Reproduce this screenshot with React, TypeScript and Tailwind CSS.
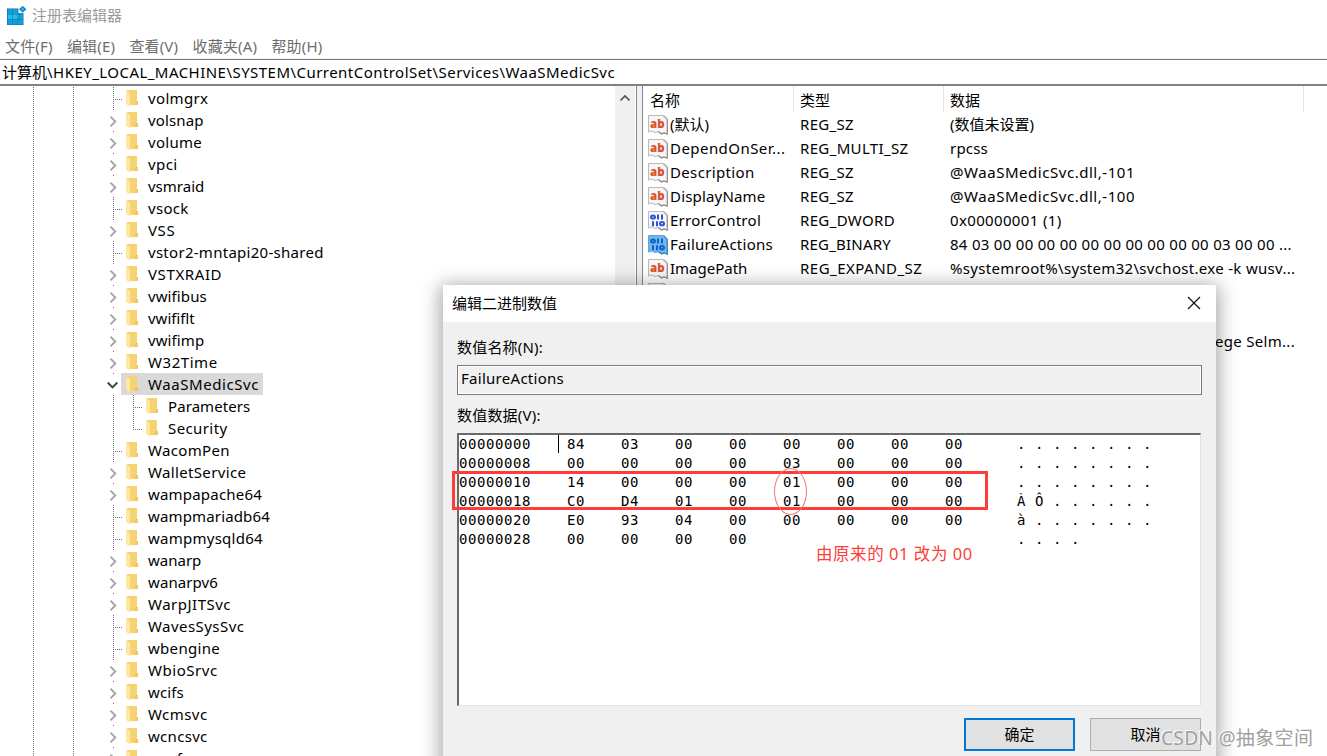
import React from "react";

type Node = { name: string; kind: "leaf" | "closed" | "open" | "child" | "last"; tracking?: string };

const tree: Node[] = [
  { name: "volmgrx", kind: "leaf", tracking: "tracking-[0.35px]" },
  { name: "volsnap", kind: "closed", tracking: "tracking-[0.15px]" },
  { name: "volume", kind: "closed", tracking: "tracking-[0.3px]" },
  { name: "vpci", kind: "closed", tracking: "tracking-[0.4px]" },
  { name: "vsmraid", kind: "closed" },
  { name: "vsock", kind: "leaf", tracking: "tracking-[0.3px]" },
  { name: "VSS", kind: "closed", tracking: "tracking-[0.6px]" },
  { name: "vstor2-mntapi20-shared", kind: "leaf", tracking: "tracking-[0.28px]" },
  { name: "VSTXRAID", kind: "closed", tracking: "tracking-[0.6px]" },
  { name: "vwifibus", kind: "closed", tracking: "tracking-[0.1px]" },
  { name: "vwififlt", kind: "closed" },
  { name: "vwifimp", kind: "closed", tracking: "tracking-[0.1px]" },
  { name: "W32Time", kind: "closed", tracking: "tracking-[0.55px]" },
  { name: "WaaSMedicSvc", kind: "open", tracking: "tracking-[0.58px]" },
  { name: "Parameters", kind: "child", tracking: "tracking-[0.08px]" },
  { name: "Security", kind: "last", tracking: "tracking-[0.4px]" },
  { name: "WacomPen", kind: "leaf", tracking: "tracking-[0.35px]" },
  { name: "WalletService", kind: "closed", tracking: "tracking-[0.35px]" },
  { name: "wampapache64", kind: "closed", tracking: "tracking-[0.2px]" },
  { name: "wampmariadb64", kind: "leaf", tracking: "tracking-[0.15px]" },
  { name: "wampmysqld64", kind: "leaf", tracking: "tracking-[0.25px]" },
  { name: "wanarp", kind: "closed" },
  { name: "wanarpv6", kind: "closed", tracking: "tracking-[0.1px]" },
  { name: "WarpJITSvc", kind: "closed", tracking: "tracking-[0.5px]" },
  { name: "WavesSysSvc", kind: "leaf", tracking: "tracking-[0.45px]" },
  { name: "wbengine", kind: "leaf", tracking: "tracking-[0.3px]" },
  { name: "WbioSrvc", kind: "closed", tracking: "tracking-[0.55px]" },
  { name: "wcifs", kind: "closed", tracking: "tracking-[0.15px]" },
  { name: "Wcmsvc", kind: "closed", tracking: "tracking-[0.45px]" },
  { name: "wcncsvc", kind: "closed", tracking: "tracking-[0.3px]" },
  { name: "wcnfs", kind: "closed", tracking: "tracking-[0.15px]" },
];

const values = [
  { icon: "ab", name: "(默认)", nt: "", type: "REG_SZ", tt: "tracking-[0.3px]", data: "(数值未设置)", dt: "" },
  { icon: "ab", name: "DependOnSer...", nt: "tracking-[0.45px]", type: "REG_MULTI_SZ", tt: "tracking-[0.35px]", data: "rpcss", dt: "tracking-[0.2px]" },
  { icon: "ab", name: "Description", nt: "tracking-[0.35px]", type: "REG_SZ", tt: "tracking-[0.3px]", data: "@WaaSMedicSvc.dll,-101", dt: "tracking-[0.54px]" },
  { icon: "ab", name: "DisplayName", nt: "tracking-[0.18px]", type: "REG_SZ", tt: "tracking-[0.3px]", data: "@WaaSMedicSvc.dll,-100", dt: "tracking-[0.54px]" },
  { icon: "bin", name: "ErrorControl", nt: "tracking-[0.27px]", type: "REG_DWORD", tt: "tracking-[0.35px]", data: "0x00000001 (1)", dt: "tracking-[0.35px]" },
  { icon: "sel", name: "FailureActions", nt: "tracking-[0.28px]", type: "REG_BINARY", tt: "tracking-[0.2px]", data: "84 03 00 00 00 00 00 00 00 00 00 00 03 00 00 ...", dt: "tracking-[0.29px]" },
  { icon: "ab", name: "ImagePath", nt: "", type: "REG_EXPAND_SZ", tt: "tracking-[0.48px]", data: "%systemroot%\\system32\\svchost.exe -k wusv...", dt: "tracking-[0.31px]" },
  { icon: "ab", name: "", nt: "", type: "", tt: "", data: "", dt: "" },
];

const hex = [
  { off: "00000000", bytes: ["84", "03", "00", "00", "00", "00", "00", "00"], text: "........" },
  { off: "00000008", bytes: ["00", "00", "00", "00", "03", "00", "00", "00"], text: "........" },
  { off: "00000010", bytes: ["14", "00", "00", "00", "01", "00", "00", "00"], text: "........" },
  { off: "00000018", bytes: ["C0", "D4", "01", "00", "01", "00", "00", "00"], text: "ÀÔ......" },
  { off: "00000020", bytes: ["E0", "93", "04", "00", "00", "00", "00", "00"], text: "à......." },
  { off: "00000028", bytes: ["00", "00", "00", "00"], text: "...." },
];

function AppIcon() {
  const cells = [0, 1, 2].flatMap((r) => [0, 1, 2].map((c) => [c, r]));
  return (
    <svg className="h-5 w-5 shrink-0" viewBox="0 0 20 20">
      <rect x="0" y="2.500" width="16.500" height="16.500" fill="#0a77b2" />
      {cells.map(([c, r]) => (
        <rect key={`${c}${r}`} x={0.7 + c * 5.3} y={3.2 + r * 5.3} width="4.700" height="4.700" fill={r === 1 && c < 2 ? "#28bdf0" : "#12a0da"} />
      ))}
      <path d="M11.500 0H20v8h-3.300v-1h-5.200z" fill="#fff" />
      <path d="M15.700-.200l3.700 3.500-3.700 3.500L12 3.300z" fill="#1583bd" />
      <path d="M15.700 1.800l1.600 1.500-1.600 1.500-1.600-1.500z" fill="#4cb8e6" />
    </svg>
  );
}

function Folder() {
  return (
    <svg className="h-[17px] w-[13px] shrink-0" viewBox="0 0 13 17">
      <path d="M1 0h10v11h1v4H1z" fill="#f6d270" />
      <path d="M10 11h2v4H8z" fill="#f0c75c" />
      <path d="M0 0.500l4 2.500v13.500L0 14z" fill="#ffe79f" />
    </svg>
  );
}

function ValueIcon({ kind }: { kind: string }) {
  const sel = kind === "sel";
  return (
    <svg className="h-5 w-5 shrink-0" viewBox="0 0 20 20">
      <path
        d="M.5.500h15l4 4v14.800l-3-1-3 .7-3-2.300-3.500.8-3-1.500-3.500 1z"
        fill={sel ? "#74b7ea" : "#f6f6f6"}
        stroke={sel ? "#5ba3dc" : "#b9b9b9"}
      />
      <path d="M15.500.500l4 4" fill="none" stroke={sel ? "#4389c4" : "#a5a5a5"} strokeWidth="1.300" />
      <path d="M19.300 4.500v14.500l-3-1-3 .7-3-2.300" fill="none" stroke={sel ? "#3f86c0" : "#929292"} strokeWidth="1.300" />
      {kind === "ab" ? (
        <text x="2" y="13.300" fontSize="12.800" fontWeight="800" fill="#dc5230" fontFamily="Open Sans, sans-serif" textLength="14.500" lengthAdjust="spacingAndGlyphs">
          ab
        </text>
      ) : (
        <g fill="none" stroke={sel ? "#0d62cf" : "#3050dc"} strokeWidth="2">
          <ellipse cx="5" cy="6" rx="2" ry="1.600" />
          <path d="M10 3.500v5M14 3.500v5M5 10.200v5M9 10.200v5" />
          <ellipse cx="14" cy="12.700" rx="2" ry="1.600" />
        </g>
      )}
    </svg>
  );
}

function TreeRow({ node }: { node: Node }) {
  const { kind } = node;
  const nested = kind === "child" || kind === "last";
  const label = <span className={`ml-[9px] whitespace-nowrap pb-px ${node.tracking ?? ""}`}>{node.name}</span>;
  return (
    <div className="flex h-[22px] shrink-0 items-center">
      <svg className={nested ? "h-[22px] w-[146px] shrink-0" : "h-[22px] w-[126px] shrink-0"} viewBox={nested ? "0 0 146 22" : "0 0 126 22"} fill="none">
        <g stroke="#6f6f6f" strokeDasharray="1 1">
          <path d="M33.500 0v22M73.500 0v22" />
          {(kind === "leaf" || nested) && <path d="M113.500 0v22" />}
          {kind === "leaf" && <path d="M115 12.500h8" />}
          {kind === "child" && <path d="M133.500 0v22M135 12.500h7" />}
          {kind === "last" && <path d="M133.500 0v13M135 12.500h7" />}
          {(kind === "closed" || kind === "open") && <path d="M113.500 0v1" />}
        </g>
        {kind === "closed" && <path d="M110.500 7.700l4.800 4.800-4.800 4.800" stroke="#a6a6a6" strokeWidth="1.900" />}
        {kind === "open" && <path d="M107.700 9.500l4.800 4.800 4.800-4.800" stroke="#404040" strokeWidth="1.900" />}
      </svg>
      {kind === "open" ? (
        <div className="-ml-[5px] flex h-[22px] w-[142px] items-center bg-[#d9d9d9] pl-[5px]">
          <Folder />
          {label}
        </div>
      ) : (
        <>
          <Folder />
          {label}
        </>
      )}
    </div>
  );
}

export default function App() {
  return (
    <div className="relative flex h-[756px] w-[1327px] flex-col overflow-hidden bg-white font-['Noto_Sans','Noto_Sans_CJK_SC',sans-serif] text-[15px] leading-[22px] text-black">
      <header className="flex h-[31px] shrink-0 items-center gap-[5px] pl-[7px] text-[#999]">
        <AppIcon />
        <span className="pb-[2px]">注册表编辑器</span>
      </header>
      <nav className="flex h-7 shrink-0 items-center gap-[14.4px] border-b border-[#f0f0f0] pl-[5px] pt-[3px] tracking-[0.15px] text-[#6d6d6d]">
        <span>文件(F)</span>
        <span>编辑(E)</span>
        <span>查看(V)</span>
        <span>收藏夹(A)</span>
        <span>帮助(H)</span>
      </nav>
      <div className="flex h-[27px] shrink-0 items-center border-b-2 border-t border-b-[#828087] border-t-[#777] pl-[2px]">
        <span className="whitespace-nowrap pb-px">
          计算机<span className="tracking-[0.46px]">\HKEY_LOCAL_MACHINE\SYSTEM\CurrentControlSet\Services\WaaSMedicSvc</span>
        </span>
      </div>
      <main className="flex min-h-0 flex-1">
        <section className="flex w-[615px] shrink-0 flex-col overflow-hidden pt-px">
          {tree.map((n) => (
            <TreeRow key={n.name} node={n} />
          ))}
        </section>
        <div className="flex w-5 shrink-0 justify-center bg-[#f0f0f0] pt-[7px]">
          <svg className="h-[10px] w-3" viewBox="0 0 12 10" fill="none">
            <path d="M1.500 7.500L6 3l4.500 4.500" stroke="#505050" strokeWidth="1.600" />
          </svg>
        </div>
        <div className="ml-px w-[7px] shrink-0 border-x border-[#828790] bg-[#f0f0f0]" />
        <section className="min-w-0 flex-1">
          <div className="grid h-[27px] grid-cols-[151px_150px_360px_1fr] pb-px">
            <span className="border-r border-[#e5e5e5] pl-[7px] pt-[3px]">名称</span>
            <span className="border-r border-[#e5e5e5] pl-[6px] pt-[3px]">类型</span>
            <span className="border-r border-[#e5e5e5] pl-[6px] pt-[3px]">数据</span>
          </div>
          {values.map((v, i) => (
            <div key={i} className="grid h-6 grid-cols-[157px_150px_1fr] items-center whitespace-nowrap">
              <span className="flex items-center gap-[2px] pl-[5px]">
                <ValueIcon kind={v.icon} />
                <span className={`pb-[2px] ${v.nt}`}>{v.name}</span>
              </span>
              <span className={`pb-[2px] ${v.tt}`}>{v.type}</span>
              <span className={`pb-[2px] ${v.dt}`}>{v.data}</span>
            </div>
          ))}
          <div className="flex h-12 items-end pb-px pl-[572px]">
            <span className="whitespace-nowrap tracking-[0.3px]">ege Selm...</span>
          </div>
        </section>
      </main>

      <div className="absolute left-[443px] top-[285px] h-[500px] w-[773px] bg-[#f0f0f0] shadow-[0_3px_18px_3px_rgba(0,0,0,0.35)]">
        <div className="flex h-[37px] items-center justify-between bg-white pl-[9px] pr-[15px]">
          <span className="pb-[2px]">编辑二进制数值</span>
          <svg className="mb-px h-[14px] w-[14px]" viewBox="0 0 14 14" fill="none">
            <path d="M1 1l12 12M13 1L1 13" stroke="#111" strokeWidth="1.200" />
          </svg>
        </div>
        <div className="flex flex-col px-[14px] pt-[14px]">
          <span className="tracking-[0.2px]">数值名称(N):</span>
          <div className="mt-[7px] h-[30px] w-[745px] border border-[#7a7a7a] pl-[3px] pt-px tracking-[0.28px] outline-1 -outline-offset-2 outline-white">FailureActions</div>
          <span className="mt-[9px] tracking-[0.2px]">数值数据(V):</span>
          <div className="relative mt-[7px] h-[273px] w-[744px] border-b border-l-2 border-r border-t-2 border-b-[#e3e3e3] border-l-[#696969] border-r-[#e3e3e3] border-t-[#696969] bg-white font-['DejaVu_Sans_Mono',monospace] text-[14px] tracking-[0.57px]">
            <div className="-mt-px">
              {hex.map((r) => (
                <div key={r.off} className="flex h-[19px] items-center">
                  <span className="w-[108px]">{r.off}</span>
                  <span className="grid w-[450px] grid-cols-[repeat(8,54px)]">
                    {r.bytes.map((b, i) => (
                      <span key={i}>{b}</span>
                    ))}
                  </span>
                  <span className="flex">
                    {r.text.split("").map((c, i) => (
                      <span key={i} className="w-[18px]">
                        {c}
                      </span>
                    ))}
                  </span>
                </div>
              ))}
            </div>
            <div className="absolute left-[99px] top-0 h-[18px] w-px bg-black" />
          </div>
          <div className="mt-3 flex justify-end gap-[15px] pr-px">
            <div className="flex h-[33px] w-[111px] items-center justify-center border-2 border-[#0078d7] bg-[#e1e1e1] pb-[2px]">确定</div>
            <div className="flex h-[33px] w-[111px] items-center justify-center border border-[#adadad] bg-[#e1e1e1] pb-[2px]">取消</div>
          </div>
        </div>
      </div>

      <div className="absolute left-[452px] top-[471px] h-[39px] w-[536px] border-[3px] border-[#fc3d39]" />
      <div className="absolute left-[774px] top-[468px] h-[47px] w-[33px] rounded-[50%] border border-[#f47674]" />
      <div className="absolute left-[816px] top-[543px] whitespace-nowrap text-[16.5px] tracking-[0.55px] text-[#fc3d39]">由原来的 01 改为 00</div>
      <div className="absolute left-[1161px] top-[727px] whitespace-nowrap text-[19px] tracking-[0.35px] text-[#a0a0a0] [text-shadow:-1px_-1px_0_#fff]">CSDN @抽象空间</div>
    </div>
  );
}
